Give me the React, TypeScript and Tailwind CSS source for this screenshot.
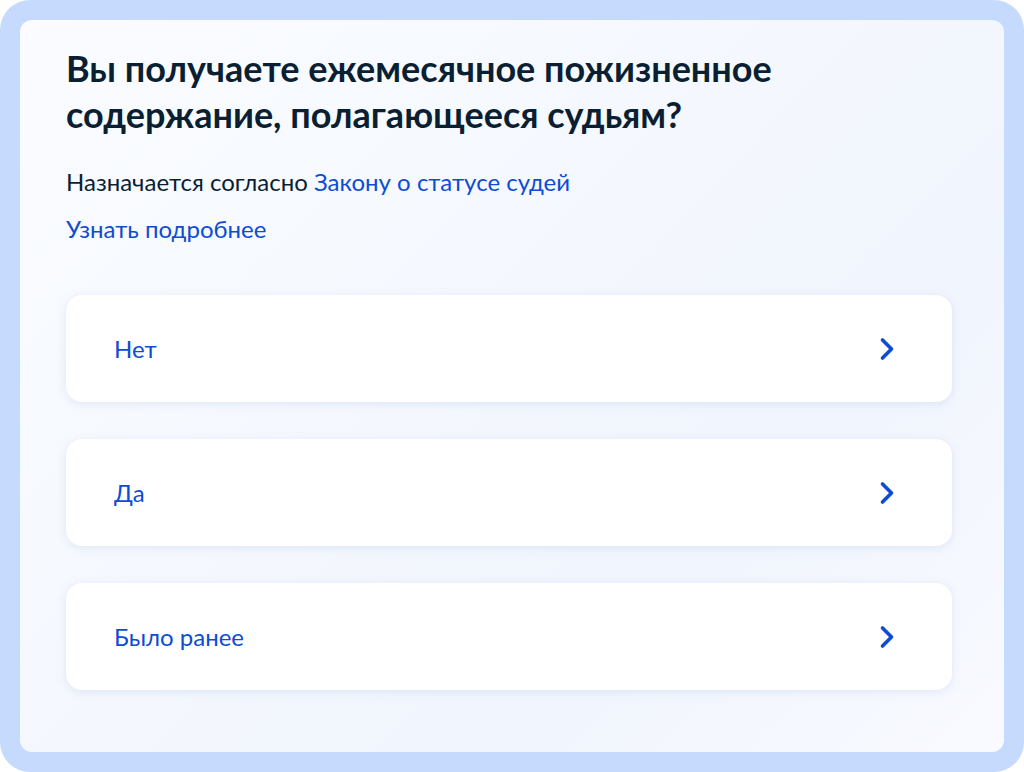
import { ChevronRight } from "lucide-react";

const options = ["Нет", "Да", "Было ранее"];

export default function App() {
  return (
    <div className="h-[772px] w-[1024px] bg-white font-['Lato',sans-serif]">
      <div className="h-full w-full rounded-[30px] bg-[#c5dafd] p-5">
        <div className="flex h-full flex-col rounded-[12px] bg-[linear-gradient(135deg,#fafcff,#f1f5fd_70%,#f8faff)] px-[46px] pt-[25px]">
          <h1 className="text-[36px] font-bold leading-[46px] text-[#0b1f33]">
            Вы получаете ежемесячное пожизненное
            <br />
            содержание, полагающееся судьям?
          </h1>
          <p className="mt-[29px] text-[24px] leading-[32px] text-[#0b1f33]">
            Назначается согласно <span className="text-[#0d4cd3]">Закону о статусе судей</span>
          </p>
          <p className="mt-[15px] text-[24px] leading-[32px] text-[#0d4cd3]">Узнать подробнее</p>
          <div className="mt-[50px] flex w-[886px] flex-col gap-[37px]">
            {options.map((o) => (
              <div
                key={o}
                className="flex h-[107px] items-center justify-between rounded-[16px] bg-white pl-[48px] pr-[47px] shadow-[0_2px_10px_rgba(120,150,210,0.18)]"
              >
                <span className="text-[24px] text-[#0d4cd3]">{o}</span>
                <ChevronRight className="h-9 w-9 text-[#0d4cd3]" strokeWidth={2.4} />
              </div>
            ))}
          </div>
        </div>
      </div>
    </div>
  );
}
